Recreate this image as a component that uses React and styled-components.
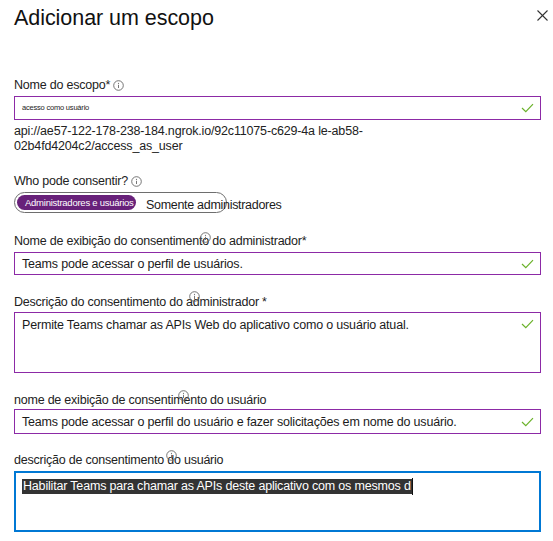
import React from "react";
import styled, { createGlobalStyle } from "styled-components";

const Global = createGlobalStyle`
  html, body { margin: 0; padding: 0; background: #fff; }
  body { font-family: "Liberation Sans", Arial, sans-serif; color: #1b1b1b; }
  * { box-sizing: border-box; }
`;

const Page = styled.div`
  width: 553px;
  height: 541px;
  padding: 0 12px 0 14px;
  overflow: hidden;
`;

const Header = styled.div`
  display: flex;
  justify-content: space-between;
  align-items: flex-start;
  padding-top: 5px;
  height: 77px;
`;

const Title = styled.h1`
  margin: 0;
  font-size: 21.5px;
  font-weight: 400;
  line-height: 26px;
  color: #111;
  letter-spacing: -0.05px;
`;

const Close = styled.div`
  width: 11px;
  height: 11px;
  margin-top: 5px;
  margin-right: -7px;
  display: flex;
`;

const Field = styled.div`
  margin-top: ${(p) => p.$mt || 0}px;
  display: flex;
  flex-direction: column;
`;

const Label = styled.div`
  position: relative;
  font-size: 12.5px;
  line-height: 16px;
  color: #222;
  letter-spacing: -0.22px;
  margin-bottom: ${(p) => p.$mb ?? 3}px;
  display: flex;
  align-items: center;
`;

const InlineInfo = styled.span`
  display: inline-flex;
  margin-left: 3px;
`;

const OverInfo = styled.span`
  position: absolute;
  left: ${(p) => p.$x}px;
  top: ${(p) => p.$y}px;
  display: inline-flex;
`;

const Box = styled.div`
  position: relative;
  width: 527px;
  height: ${(p) => p.$h}px;
  border: ${(p) => (p.$focus ? "2px solid #0078d4" : "1px solid #8c2aa6")};
  padding: ${(p) => (p.$focus ? "4px 6px" : p.$multi ? "4px 7px" : "0 7px")};
  display: flex;
  align-items: ${(p) => (p.$multi ? "flex-start" : "center")};
  font-size: ${(p) => p.$fs || 12.5}px;
  letter-spacing: ${(p) => (p.$fs ? "-0.2px" : "-0.18px")};
  color: #1b1b1b;
  line-height: 16px;
`;

const Check = styled.span`
  position: absolute;
  right: 6px;
  top: ${(p) => (p.$multi ? "6px" : "50%")};
  transform: ${(p) => (p.$multi ? "none" : "translateY(-50%)")};
  display: flex;
`;

const ApiText = styled.div`
  margin-top: 4px;
  font-size: 12.5px;
  line-height: 15px;
  letter-spacing: -0.17px;
  color: #222;
`;

const Toggle = styled.div`
  width: 213px;
  height: 21px;
  border: 1px solid #6e6e6e;
  border-radius: 11px;
  display: flex;
  align-items: center;
  padding: 0 2px;
  gap: 10px;
`;

const Pill = styled.div`
  background: #68217a;
  color: #fff;
  border-radius: 9px;
  height: 15px;
  padding: 0 0 0 8px;
  width: 119px;
  flex-shrink: 0;
  display: flex;
  align-items: center;
  font-size: 9.5px;
  letter-spacing: -0.25px;
  white-space: nowrap;
  overflow: hidden;
`;

const ToggleText = styled.div`
  font-size: 12.5px;
  letter-spacing: -0.3px;
  white-space: nowrap;
  margin-top: 4px;
  margin-right: -60px;
`;

const Selected = styled.span`
  background: #333;
  color: #fff;
  padding: 0 1px;
  line-height: 15px;
  margin-top: 2px;
  white-space: nowrap;
`;

const Caret = styled.span`
  display: inline-block;
  width: 1px;
  height: 17px;
  background: #111;
  margin-top: 1px;
`;

const InfoIcon = () => (
  <svg width="11" height="11" viewBox="0 0 11 11">
    <circle cx="5.5" cy="5.5" r="4.8" fill="none" stroke="#666" strokeWidth="0.9" />
    <circle cx="5.5" cy="3.3" r="0.6" fill="#666" />
    <line x1="5.5" y1="4.8" x2="5.5" y2="8" stroke="#666" strokeWidth="0.9" />
  </svg>
);

const CheckIcon = () => (
  <svg width="13" height="10" viewBox="0 0 13 10">
    <polyline points="1,5 4.8,8.6 12,1.2" fill="none" stroke="#6bb22b" strokeWidth="1.2" />
  </svg>
);

const CloseIcon = () => (
  <svg width="11" height="11" viewBox="0 0 11 11">
    <line x1="0.5" y1="0.5" x2="10.5" y2="10.5" stroke="#333" strokeWidth="1.1" />
    <line x1="10.5" y1="0.5" x2="0.5" y2="10.5" stroke="#333" strokeWidth="1.1" />
  </svg>
);

export default function App() {
  return (
    <Page>
      <Global />
      <Header>
        <Title>Adicionar um escopo</Title>
        <Close>
          <CloseIcon />
        </Close>
      </Header>

      <Field>
        <Label>
          Nome do escopo*
          <InlineInfo>
            <InfoIcon />
          </InlineInfo>
        </Label>
        <Box $h={24} $fs={7.5}>
          acesso como usuário
          <Check>
            <CheckIcon />
          </Check>
        </Box>
        <ApiText>
          api://ae57-122-178-238-184.ngrok.io/92c11075-c629-4a le-ab58-
          <br />
          02b4fd4204c2/access_as_user
        </ApiText>
      </Field>

      <Field $mt={19}>
        <Label>
          Who pode consentir?
          <InlineInfo>
            <InfoIcon />
          </InlineInfo>
        </Label>
        <Toggle>
          <Pill>Administradores e usuários</Pill>
          <ToggleText>Somente administradores</ToggleText>
        </Toggle>
      </Field>

      <Field $mt={20}>
        <Label>
          Nome de exibição do consentimento do administrador*
          <OverInfo $x={186} $y={-1}>
            <InfoIcon />
          </OverInfo>
        </Label>
        <Box $h={23}>
          Teams pode acessar o perfil de usuários.
          <Check>
            <CheckIcon />
          </Check>
        </Box>
      </Field>

      <Field $mt={19}>
        <Label $mb={2}>
          Descrição do consentimento do administrador *
          <OverInfo $x={175} $y={-3}>
            <InfoIcon />
          </OverInfo>
        </Label>
        <Box $h={61} $multi>
          Permite Teams chamar as APIs Web do aplicativo como o usuário atual.
          <Check $multi>
            <CheckIcon />
          </Check>
        </Box>
      </Field>

      <Field $mt={19}>
        <Label $mb={1}>
          nome de exibição de consentimento do usuário
          <OverInfo $x={164} $y={-2}>
            <InfoIcon />
          </OverInfo>
        </Label>
        <Box $h={25}>
          Teams pode acessar o perfil do usuário e fazer solicitações em nome do usuário.
          <Check>
            <CheckIcon />
          </Check>
        </Box>
      </Field>

      <Field $mt={18}>
        <Label>
          descrição de consentimento do usuário
          <OverInfo $x={152} $y={-2}>
            <InfoIcon />
          </OverInfo>
        </Label>
        <Box $h={61} $multi $focus>
          <Selected>Habilitar Teams para chamar as APIs deste aplicativo com os mesmos d</Selected>
          <Caret />
        </Box>
      </Field>
    </Page>
  );
}
